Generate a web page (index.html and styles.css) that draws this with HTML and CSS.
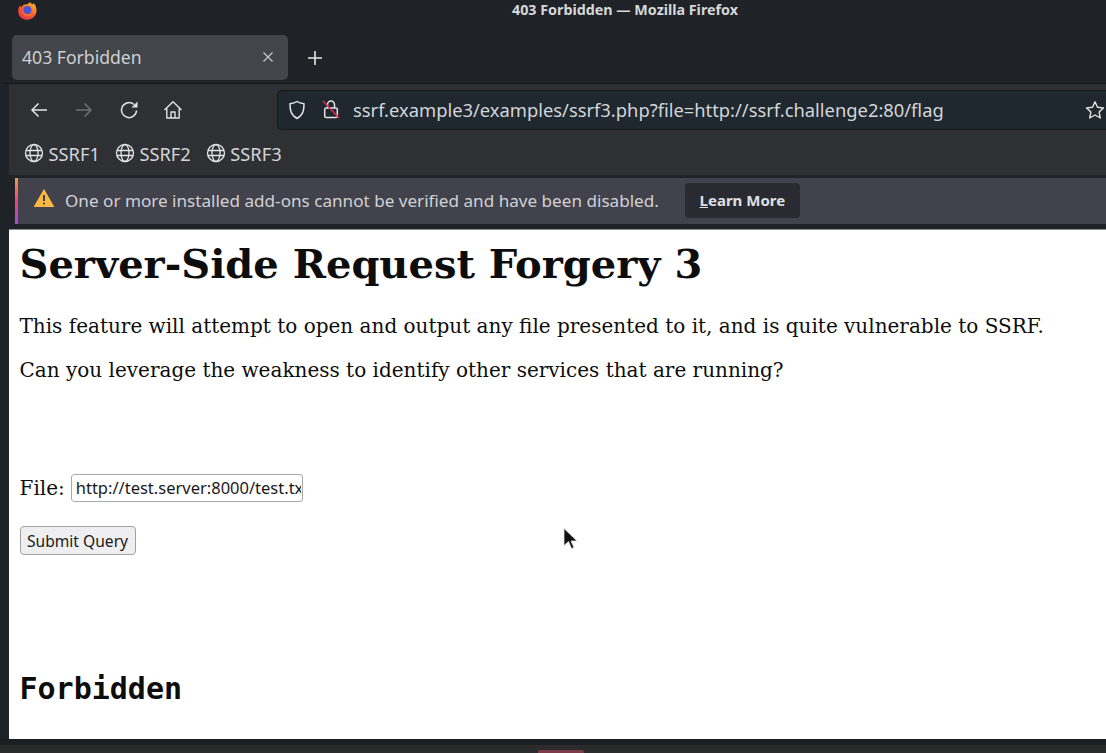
FILE: index.html
```html
<!DOCTYPE html>
<html lang="en">
<head>
<meta charset="utf-8">
<title>403 Forbidden — Mozilla Firefox</title>
<link rel="stylesheet" href="styles.css">
</head>
<body>
<div class="window">
  <header class="titlebar">
    <svg class="fx-logo" viewBox="0 0 20 20" width="19" height="19">
      <defs><linearGradient id="fx" x1="0.8" y1="0" x2="0.2" y2="1"><stop offset="0" stop-color="#ffc21f"/><stop offset=".5" stop-color="#f8602c"/><stop offset="1" stop-color="#e8304f"/></linearGradient></defs>
      <path d="M13 .8c.2 1.600 1.300 2.200 2.500 3 .4-.6.700-1.200.8-1.800 2 2 3.200 4.800 3.200 8 0 5.500-4.500 9.800-10 9.800S.2 15.500.2 10.500C.2 8 1 6 2.500 4.500c0 1 .3 1.800.9 2.300C4.500 4.500 6.500 3.500 9 3.500c1.500-.5 3.300-1.300 4-2.700z" fill="url(#fx)"/>
      <circle cx="10" cy="9.500" r="4.200" fill="#4a55d8"/>
      <path d="M4.200 9.500c0 4 2.700 6.600 6 6.600 3 0 5.300-2 5.700-5-1 2.200-3 3.500-5.400 3.300-3-.2-5.300-2-6.300-4.900z" fill="#f9782a"/>
    </svg>
    <span class="title-text">403 Forbidden — Mozilla Firefox</span>
  </header>
  <div class="tabstrip">
    <div class="tab">
      <span class="tab-label">403 Forbidden</span>
      <svg class="tab-close" viewBox="0 0 12 12" width="12" height="12"><path d="M1.500 1.500l9 9M10.500 1.500l-9 9" stroke="#c4c5c9" stroke-width="1.300" fill="none"/></svg>
    </div>
    <svg class="newtab" viewBox="0 0 16 16" width="16" height="16"><path d="M8 1v14M1 8h14" stroke="#e6e6e8" stroke-width="1.600" fill="none"/></svg>
  </div>
  <div class="chrome">
    <nav class="navbar">
      <div class="nav-buttons">
        <svg viewBox="0 0 20 20" width="20" height="20"><path d="M18 10H3M9.500 3.500L3 10l6.500 6.500" stroke="#e2e3e5" stroke-width="1.500" fill="none"/></svg>
        <svg viewBox="0 0 20 20" width="20" height="20"><path d="M2 10h15M10.500 3.500L17 10l-6.500 6.500" stroke="#6d7075" stroke-width="1.500" fill="none"/></svg>
        <svg viewBox="0 0 20 20" width="20" height="20"><path d="M17.500 10.500a7.500 7.500 0 1 1-2.500-6" stroke="#e2e3e5" stroke-width="1.500" fill="none"/><path d="M18.500 1.500v6h-6z" fill="#e2e3e5"/></svg>
        <svg viewBox="0 0 20 20" width="20" height="20"><path d="M.5 10L9 1.800 17.500 10M2.800 8.500V18h12.400V8.500M7 18v-6h4v6" stroke="#e2e3e5" stroke-width="1.400" fill="none" stroke-linejoin="round"/></svg>
      </div>
      <div class="urlbar">
        <svg class="url-shield" viewBox="0 0 18 20" width="18" height="20"><path d="M9 1.500c2 1.500 4.500 2 7 2.200 0 6-.5 11-7 14.800C2.500 14.700 2 9.700 2 3.700c2.500-.2 5-.7 7-2.200z" stroke="#e2e3e5" stroke-width="1.500" fill="none" stroke-linejoin="round"/></svg>
        <svg class="url-lock" viewBox="0 0 18 20" width="18" height="20"><path d="M5.500 9V5.500a3.500 3.500 0 0 1 7 0V9" stroke="#e2e3e5" stroke-width="1.500" fill="none"/><rect x="2.700" y="9" width="12.600" height="9.500" rx="1.500" stroke="#e2e3e5" stroke-width="1.500" fill="none"/><path d="M1 2l16 17" stroke="#e22850" stroke-width="1.500"/></svg>
        <span class="url-text">ssrf.example3/examples/ssrf3.php?file=http://ssrf.challenge2:80/flag</span>
        <svg class="url-star" viewBox="0 0 20 20" width="20" height="20"><path d="M10 1.800l2.500 5.500 6 .7-4.400 4.100 1.200 5.900-5.300-3-5.300 3 1.200-5.900L1.500 8l6-.7z" stroke="#e2e3e5" stroke-width="1.400" fill="none" stroke-linejoin="round"/></svg>
      </div>
    </nav>
    <div class="bookmarks">
      <span class="bookmark"><svg viewBox="0 0 20 20" width="20" height="20"><g stroke="#e2e3e5" stroke-width="1.300" fill="none"><circle cx="10" cy="10" r="8.500"/><ellipse cx="10" cy="10" rx="4" ry="8.500"/><path d="M1.800 7.500h16.400M1.800 12.500h16.400"/></g></svg>SSRF1</span>
      <span class="bookmark"><svg viewBox="0 0 20 20" width="20" height="20"><g stroke="#e2e3e5" stroke-width="1.300" fill="none"><circle cx="10" cy="10" r="8.500"/><ellipse cx="10" cy="10" rx="4" ry="8.500"/><path d="M1.800 7.500h16.400M1.800 12.500h16.400"/></g></svg>SSRF2</span>
      <span class="bookmark"><svg viewBox="0 0 20 20" width="20" height="20"><g stroke="#e2e3e5" stroke-width="1.300" fill="none"><circle cx="10" cy="10" r="8.500"/><ellipse cx="10" cy="10" rx="4" ry="8.500"/><path d="M1.800 7.500h16.400M1.800 12.500h16.400"/></g></svg>SSRF3</span>
    </div>
  </div>
  <div class="notice">
    <svg class="notice-icon" viewBox="0 0 20 18" width="20" height="18"><path d="M10 1L19.500 17.500H.5z" fill="#fdb843" stroke="#fdb843" stroke-width="1.200" stroke-linejoin="round"/><path d="M10 6v6" stroke="#3f3f48" stroke-width="2"/><circle cx="10" cy="14.500" r="1.100" fill="#3f3f48"/></svg>
    <span class="notice-text">One or more installed add-ons cannot be verified and have been disabled.</span>
    <span class="notice-btn"><u>L</u>earn More</span>
  </div>
  <main class="page">
    <h1>Server-Side Request Forgery 3</h1>
    <p>This feature will attempt to open and output any file presented to it, and is quite vulnerable to SSRF.</p>
    <p>Can you leverage the weakness to identify other services that are running?</p>
    <form class="query">
      <div class="file-row"><label for="file">File:</label> <input id="file" type="text" value="http://test.server:8000/test.txt"></div>
      <button type="button">Submit Query</button>
    </form>
    <h2>Forbidden</h2>
    <svg class="cursor" viewBox="0 0 16 24" width="16" height="25"><path d="M1 1v17l4.500-4 3 7 2.500-1-3-6.500h6z" fill="#111" stroke="#ddd" stroke-width=".8"/></svg>
  </main>
  <footer class="desktop"><span class="task"></span></footer>
</div>
</body>
</html>
```
FILE: styles.css
```css
html, body { margin: 0; padding: 0; height: 100%; overflow: hidden; background: #3a3b3c; }
svg { display: block; flex: none; }
.window {
  height: 753px;
  width: 1106px;
  display: flex;
  flex-direction: column;
  box-sizing: border-box;
  padding-left: 3px;
  background: #1f2226;
  font-family: "Noto Sans", sans-serif;
  color: #e2e3e5;
  overflow: hidden;
}
.titlebar {
  height: 26px;
  flex: none;
  display: flex;
  align-items: flex-start;
  justify-content: center;
  position: relative;
  padding-left: 141px;
  background: #1f2226;
}
.fx-logo { position: absolute; left: 15px; top: 1px; }
.title-text { font-size: 14.300px; line-height: 20px; font-weight: 700; color: #d6d7d9; }
.tabstrip {
  height: 58px;
  flex: none;
  display: flex;
  align-items: flex-start;
  box-sizing: border-box;
  padding: 9px 0 0 9px;
  border-bottom: 1px solid #15171a;
}
.tab {
  width: 276px;
  height: 45px;
  box-sizing: border-box;
  padding: 0 14px 2px 10px;
  display: flex;
  align-items: center;
  justify-content: space-between;
  background: #42454a;
  border-radius: 5px;
}
.tab-label { font-size: 17.600px; color: #cfd0d3; }
.newtab { margin: 15px 0 0 19px; }
.chrome { flex: none; background: #2e3034; margin-left: 6px; }
.navbar {
  height: 46px;
  box-sizing: border-box;
  display: flex;
  align-items: flex-start;
  padding: 6px 0 0 20px;
}
.nav-buttons { display: flex; gap: 25px; width: 248px; flex: none; margin-top: 10px; }
.urlbar {
  flex: 1;
  height: 40px;
  box-sizing: border-box;
  display: flex;
  align-items: center;
  background: #1f272f;
  border: 1px solid #15171a;
  border-right: none;
  border-radius: 5px 0 0 5px;
  padding-left: 10px;
  min-width: 0;
  position: relative;
}
.url-lock { margin-left: 16px; margin-bottom: 2px; }
.url-text { font-size: 18.350px; color: #d3d5d8; margin: 0 0 2px 13px; white-space: nowrap; }
.url-star { position: absolute; right: 1px; top: 9px; }
.bookmarks {
  height: 45px;
  box-sizing: border-box;
  padding: 1px 0 0 15px;
  display: flex;
  align-items: center;
  gap: 15px;
}
.bookmark { display: flex; align-items: center; gap: 4.500px; font-size: 18.300px; color: #d3d5d8; }
.notice {
  height: 46px;
  flex: none;
  margin: 3px 0 5px 12px;
  display: flex;
  align-items: center;
  background: #42424c;
  border-left: 3px solid;
  border-image: linear-gradient(#f0a040, #e8447c 50%, #9a4fe0) 1;
  box-sizing: border-box;
  padding-left: 16px;
}
.notice-icon { margin-top: -6px; }
.notice-text { font-size: 17.130px; color: #d0d1d5; margin: 0 0 2px 11px; white-space: nowrap; }
.notice-btn {
  margin: 0 0 2px 26px;
  width: 115px;
  height: 35px;
  display: flex;
  align-items: center;
  justify-content: center;
  border-radius: 4px;
  background: #2a2a32;
  font-size: 15px;
  font-weight: 700;
  color: #dfe0e3;
}
.page {
  height: 510px;
  flex: none;
  margin-left: 6px;
  box-sizing: border-box;
  padding: 0 0 0 10.500px;
  background: #fff;
  color: #0d0d0d;
  font-family: "DejaVu Serif", serif;
  border-top: 1px solid #8c8d8f;
  position: relative;
}
h1 { font-size: 40px; font-weight: 700; margin: 9px 0 0; line-height: 50px; white-space: nowrap; }
p { font-size: 20px; margin: 0; line-height: 28px; white-space: nowrap; }
h1 + p { margin-top: 23px; }
p + p { margin-top: 16px; }
.query { margin: 0; padding-top: 89px; }
.file-row { display: flex; align-items: center; gap: 6px; font-size: 20px; height: 29px; }
#file {
  width: 232px;
  height: 28px;
  box-sizing: border-box;
  padding: 0 1px 0 4px;
  border: 1px solid #a9a9b5;
  border-radius: 3px;
  font: 16.500px "Noto Sans", sans-serif;
  color: #1a1a1a;
}
button {
  display: block;
  margin-top: 24px;
  width: 116px;
  height: 29px;
  padding: 0;
  border: 1px solid #a0a0a8;
  border-radius: 4px;
  background: #efeff1;
  font: 15.600px "Noto Sans", sans-serif;
  color: #1a1a1a;
}
h2 { font-family: "DejaVu Sans Mono", monospace; font-size: 30px; font-weight: 700; margin: 114px 0 0; line-height: 40px; }
.cursor { position: absolute; left: 554px; top: 297px; }
.desktop { flex: 1; margin-left: -3px; background: #2b2b2b; border-top: 6px solid #1a1f22; position: relative; }
.task { position: absolute; left: 538px; top: 5px; width: 46px; height: 4px; background: #7d3b47; border-radius: 2px 2px 0 0; }
```
